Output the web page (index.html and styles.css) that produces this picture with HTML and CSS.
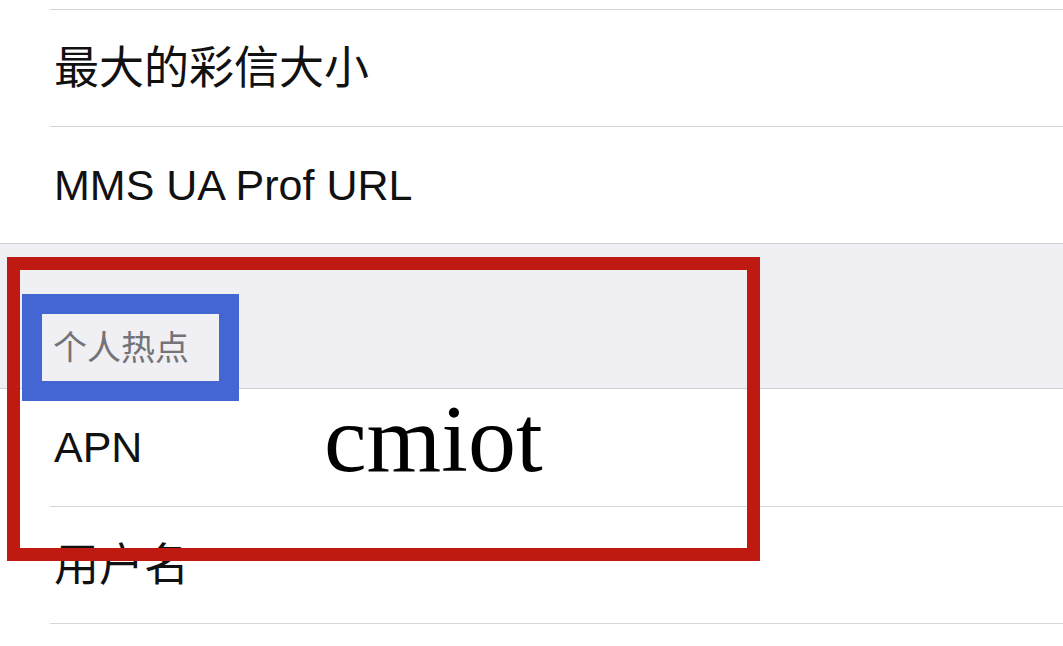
FILE: index.html
```html
<!DOCTYPE html>
<html lang="zh-CN">
<head>
  <meta charset="UTF-8" />
  <meta name="viewport" content="width=device-width, initial-scale=1.0" />
  <title>蜂窝数据网络</title>
  <link rel="stylesheet" href="styles.css">
</head>
<body>
  <div class="settings">
    <div class="group">
      <div class="cell"><span class="cell-label">最大的彩信大小</span></div>
      <div class="cell"><span class="cell-label latin">MMS UA Prof URL</span></div>
    </div>

    <div class="group-header">个人热点</div>

    <div class="group">
      <div class="cell">
        <span class="cell-label latin narrow">APN</span>
        <span class="note">cmiot</span>
      </div>
      <div class="cell"><span class="cell-label">用户名</span></div>
      <div class="cell"></div>
    </div>

    <!-- annotation marks drawn over the screenshot -->
    <div class="mark-red"></div>
    <div class="mark-blue"></div>
  </div>
</body>
</html>
```

FILE: styles.css
```css
:root {
  --font-ui: 'Liberation Sans', 'Noto Sans CJK SC', sans-serif;
  --font-note: 'Liberation Serif', serif;
  --line: #d6d6da;
  --group-bg: #efeff4;
  --red: #be1a12;
  --blue: #4466d2;
}
* {
  margin: 0;
  padding: 0;
  box-sizing: border-box;
}
body {
  font-family: var(--font-ui);
  background: #fff;
  color: #111;
  overflow: hidden;
}
.settings {
  position: relative;
  padding-top: 9px;
  height: 646px;
  overflow: hidden;
}
.cell {
  display: flex;
  align-items: center;
  height: 117px;
  margin-left: 50px;
  padding-left: 4px;
  border-top: 1px solid var(--line);
  font-size: 45px;
  line-height: 1;
}
.group-header + .group .cell:first-child {
  border-top: none;
}
.cell-label.latin {
  font-size: 43px;
}
.cell-label.narrow {
  width: 270px;
}
.note {
  font-family: var(--font-note);
  font-size: 96px;
  line-height: 1;
  color: #000;
  margin-bottom: 18px;
}
.group-header {
  display: flex;
  align-items: flex-end;
  height: 146px;
  padding: 0 0 23px 53px;
  background: var(--group-bg);
  border-top: 1px solid #d0d0d4;
  border-bottom: 1px solid #d0d0d4;
  font-size: 34px;
  line-height: 1;
  color: #737378;
}
.mark-red {
  position: absolute;
  left: 7px;
  top: 257px;
  width: 753px;
  height: 304px;
  border: 13px solid var(--red);
}
.mark-blue {
  position: absolute;
  left: 22px;
  top: 294px;
  width: 217px;
  height: 107px;
  border: 20px solid var(--blue);
}
```
